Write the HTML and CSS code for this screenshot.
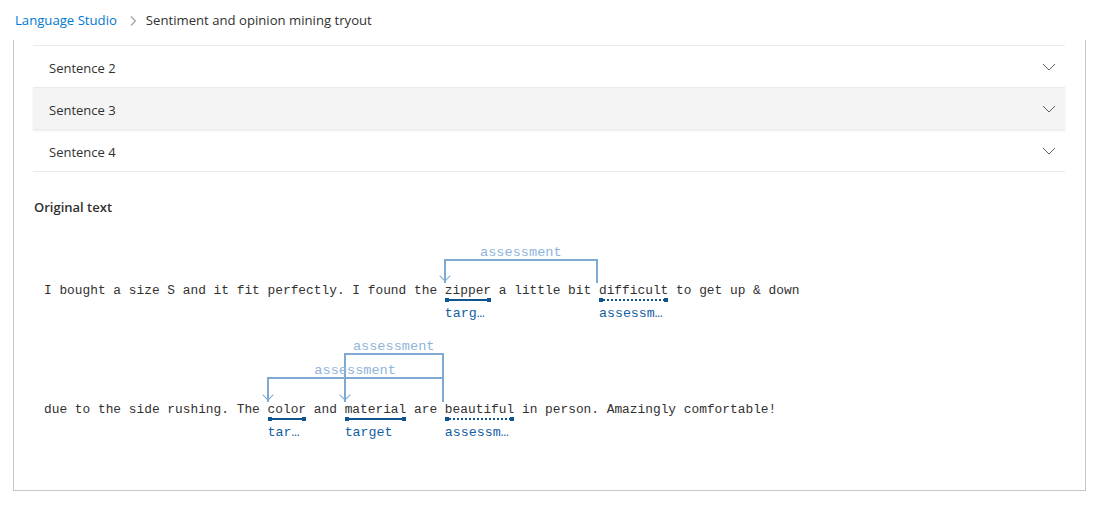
FILE: index.html
```html
<!DOCTYPE html>
<html>
<head>
<meta charset="utf-8">
<link rel="stylesheet" href="styles.css">
</head>
<body>
<nav class="crumbs">
  <a class="crumb-link">Language Studio</a>
  <svg class="crumb-sep" width="8" height="12" viewBox="0 0 8 12"><path d="M2 1.5 L6.5 6 L2 10.5" fill="none" stroke="#a19f9d" stroke-width="1.1"/></svg>
  <span class="crumb-current">Sentiment and opinion mining tryout</span>
</nav>
<section class="panel">
  <div class="rows">
    <div class="row"><span>Sentence 2</span><svg class="chev" width="14" height="8" viewBox="0 0 14 8"><path d="M1 1 L7 7 L13 1" fill="none" stroke="#605e5c" stroke-width="1"/></svg></div>
    <div class="row row-hover"><span>Sentence 3</span><svg class="chev" width="14" height="8" viewBox="0 0 14 8"><path d="M1 1 L7 7 L13 1" fill="none" stroke="#605e5c" stroke-width="1"/></svg></div>
    <div class="row"><span>Sentence 4</span><svg class="chev" width="14" height="8" viewBox="0 0 14 8"><path d="M1 1 L7 7 L13 1" fill="none" stroke="#605e5c" stroke-width="1"/></svg></div>
  </div>
  <h3 class="heading">Original text</h3>
  <div class="sent sent-1"><div class="arc" style="left:52ch; width:20ch; top:-22px; height:24px;"><span class="arc-label">assessment</span></div>I bought a size S and it fit perfectly. I found the <span class="tok target">zipper<span class="lbl">target</span></span> a little bit <span class="tok assess">difficult<span class="lbl">assessment</span></span> to get up &amp; down</div>
  <div class="sent sent-2"><div class="arc" style="left:39ch; width:13ch; top:-47px; height:49px;"><span class="arc-label">assessment</span></div><div class="arc" style="left:29ch; width:23ch; top:-23px; height:25px;"><span class="arc-label">assessment</span></div>due to the side rushing. The <span class="tok target">color<span class="lbl">target</span></span> and <span class="tok target">material<span class="lbl">target</span></span> are <span class="tok assess">beautiful<span class="lbl">assessment</span></span> in person. Amazingly comfortable!</div>
</section>
</body>
</html>
```
FILE: styles.css
```css
html, body {
  margin: 0;
  padding: 0;
  background: #ffffff;
}
body {
  font-family: "Open Sans", "Noto Sans", sans-serif;
  color: #323130;
  width: 1118px;
  height: 511px;
  overflow: hidden;
}
.crumbs {
  height: 40px;
  display: flex;
  align-items: center;
  padding-left: 15px;
  font-size: 13.15px;
}
.crumb-link {
  color: #0078d4;
}
.crumb-sep {
  margin: 1px 9px 0 12px;
}
.crumb-current {
  color: #323130;
}
.panel {
  margin-left: 13px;
  width: 1073px;
  box-sizing: border-box;
  border: 1px solid #c8c6c4;
  border-top: none;
  padding: 5px 20px 70px 19px;
}
.rows {
  border-top: 1px solid #edebe9;
}
.row {
  border-bottom: 1px solid #edebe9;
  display: flex;
  align-items: center;
  justify-content: space-between;
  padding: 2px 9px 0 16px;
  box-sizing: border-box;
  height: 42px;
  font-size: 13px;
}
.row-hover {
  background: #f4f4f4;
  box-shadow: 0 1px 2px rgba(0, 0, 0, 0.08);
  position: relative;
}
.chev {
  margin-top: -1px;
}
.heading {
  margin: 25px 0 0 1px;
  font-size: 13px;
  font-weight: 600;
  line-height: 20px;
  color: #323130;
}
.sent {
  position: relative;
  margin-left: 11px;
  font-family: "Liberation Mono", "DejaVu Sans Mono", monospace;
  font-size: 12.85px;
  line-height: 20px;
  white-space: nowrap;
  color: #323130;
}
.sent-1 {
  margin-top: 64px;
}
.sent-2 {
  margin-top: 99px;
}
.tok {
  position: relative;
  display: inline-block;
}
.tok::after {
  content: "";
  position: absolute;
  left: 0;
  right: 0;
  top: 17px;
  height: 4px;
}
.target::after {
  background:
    linear-gradient(#0f548c, #0f548c) left center / 4px 4px no-repeat,
    linear-gradient(#0f548c, #0f548c) right center / 4px 4px no-repeat,
    linear-gradient(#0f548c, #0f548c) center / 100% 2px no-repeat;
}
.assess::after {
  background:
    linear-gradient(#0f548c, #0f548c) left center / 4px 4px no-repeat,
    linear-gradient(#0f548c, #0f548c) right center / 4px 4px no-repeat,
    repeating-linear-gradient(to right, #0f548c 0 2px, transparent 2px 4px) center / 100% 2px no-repeat;
}
.lbl {
  position: absolute;
  left: 0;
  top: 24px;
  width: 100%;
  font-size: 13.3px;
  line-height: 18px;
  color: #115ea3;
  overflow: hidden;
  text-overflow: ellipsis;
  white-space: nowrap;
}
.arc {
  position: absolute;
  margin-left: -1px;
  box-sizing: border-box;
  border: 2px solid #7ea9d3;
  border-bottom: none;
}
.arc::after {
  content: "";
  position: absolute;
  left: -5px;
  bottom: 3px;
  width: 7px;
  height: 7px;
  border-right: 1.5px solid #7ea9d3;
  border-bottom: 1.5px solid #7ea9d3;
  transform: rotate(45deg);
}
.arc-label {
  position: absolute;
  left: 50%;
  bottom: 100%;
  transform: translateX(-50%);
  margin-bottom: 1px;
  font-size: 13.6px;
  line-height: 14px;
  color: #8fb4da;
}
```
